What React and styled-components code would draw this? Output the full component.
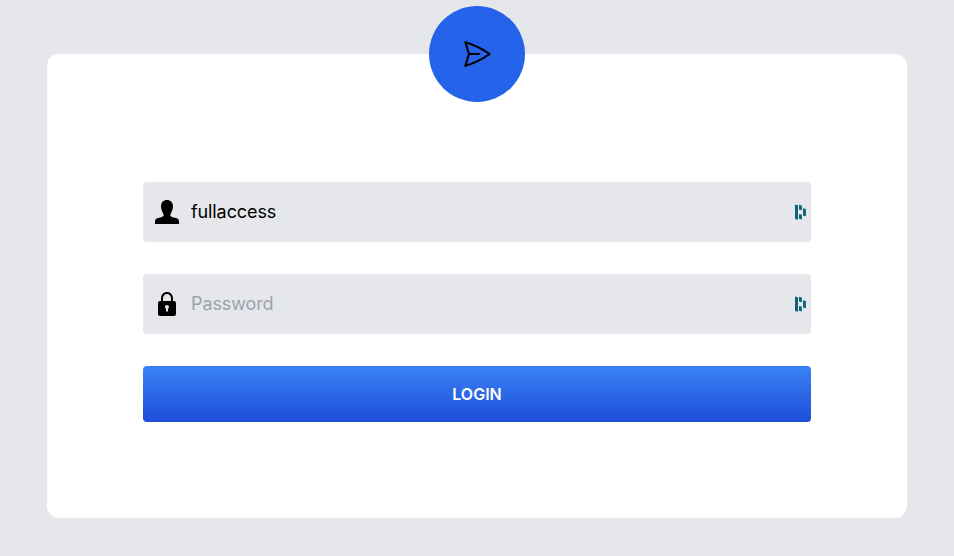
import React from "react";
import styled, { createGlobalStyle } from "styled-components";

const GlobalStyle = createGlobalStyle`
  *, *::before, *::after { box-sizing: border-box; }
  body {
    margin: 0;
    background: #e5e7eb;
    font-family: Inter, "Liberation Sans", sans-serif;
    line-height: 1.5;
  }
`;

const Page = styled.main`
  min-height: 556px;
  padding: 54px 47px 38px;
  background: #e5e7eb;
`;

const Card = styled.section`
  position: relative;
  height: 464px;
  padding: 128px 96px 96px;
  border-radius: 12px;
  background: #fff;
`;

const Badge = styled.div`
  position: absolute;
  top: -48px;
  left: 50%;
  display: flex;
  align-items: center;
  justify-content: center;
  width: 96px;
  height: 96px;
  border-radius: 50%;
  background: #2563eb;
  transform: translateX(-50%);
`;

const Form = styled.form`
  display: flex;
  flex-direction: column;
  gap: 32px;
`;

const Field = styled.label`
  display: flex;
  align-items: center;
  height: 60px;
  padding: 0 4px 0 12px;
  border-radius: 4px;
  background: #e5e7eb;
`;

const FieldIcon = styled.svg`
  flex: none;
  width: 24px;
  height: 24px;
  margin-right: 12px;
  fill: #000;
`;

const Input = styled.input`
  flex: 1;
  min-width: 0;
  height: 28px;
  padding: 0;
  border: 0;
  outline: 0;
  background: transparent;
  color: #000;
  font: 400 18px/28px Inter, "Liberation Sans", sans-serif;
  letter-spacing: -0.1px;

  &::placeholder {
    color: #9ca3af;
    opacity: 1;
  }
`;

const ManagerIcon = styled.svg`
  flex: none;
  width: 14px;
  height: 16px;
  fill: #0e6376;
`;

const LoginButton = styled.button`
  height: 56px;
  padding: 0;
  border: 0;
  border-radius: 4px;
  background: linear-gradient(to bottom, #3b82f6, #1d4ed8);
  color: #fff;
  font: 600 16px/24px Inter, "Liberation Sans", sans-serif;
  text-transform: uppercase;
`;

const PlaneIcon = () => (
  <svg width="32" height="32" viewBox="0 0 24 24" fill="none" stroke="#000" strokeWidth="1.6" strokeLinecap="round" strokeLinejoin="round">
    <path d="M6 12L3.269 3.126A59.768 59.768 0 0121.485 12 59.77 59.77 0 013.27 20.876L5.999 12zm0 0h7.5" />
  </svg>
);

const UserIcon = () => (
  <FieldIcon viewBox="0 0 24 24">
    <path d="M20.822 18.096c-3.439-.794-6.64-1.49-5.09-4.418 4.72-8.912 1.251-13.678-3.732-13.678-5.082 0-8.464 4.949-3.732 13.678 1.597 2.945-1.725 3.641-5.09 4.418-3.073.71-3.188 2.236-3.178 4.904l.004 1h23.99l.004-.969c.012-2.688-.092-4.222-3.176-4.935z" />
  </FieldIcon>
);

const LockIcon = () => (
  <FieldIcon viewBox="0 0 24 24">
    <path fillRule="evenodd" d="M18 9v-3c0-3.313-2.687-6-6-6s-6 2.687-6 6v3h-1a2 2 0 0 0-2 2v11a2 2 0 0 0 2 2h14a2 2 0 0 0 2-2v-11a2 2 0 0 0-2-2h-1zm-5 7.723v2.277l-1 1-1-1v-2.277c-.595-.347-1-.984-1-1.723 0-1.104.896-2 2-2s2 .896 2 2c0 .738-.404 1.376-1 1.723zm-5-7.723v-3c0-2.206 1.794-4 4-4s4 1.794 4 4v3h-8z" />
  </FieldIcon>
);

const DashIcon = () => (
  <ManagerIcon viewBox="0 0 14 16">
    <path d="M2 .5L5 1.2V15.8L2 15.1zM6 .8L8.9 1.5V6.2L6 5.5zM6 10L8.9 10.7V15.5L6 14.8zM10 4.3L12.9 5V12.2L10 11.5z" />
  </ManagerIcon>
);

export default function App() {
  return (
    <>
      <GlobalStyle />
      <Page>
        <Card>
          <Badge><PlaneIcon /></Badge>
          <Form onSubmit={(event) => event.preventDefault()}>
            <Field>
              <UserIcon />
              <Input type="text" aria-label="Username" defaultValue="fullaccess" spellCheck={false} />
              <DashIcon />
            </Field>
            <Field>
              <LockIcon />
              <Input type="password" placeholder="Password" />
              <DashIcon />
            </Field>
            <LoginButton type="submit">Login</LoginButton>
          </Form>
        </Card>
      </Page>
    </>
  );
}
